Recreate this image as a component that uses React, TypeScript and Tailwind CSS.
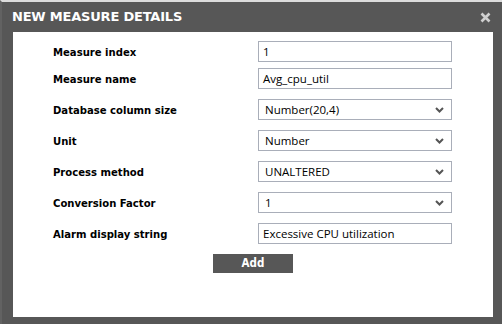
import React from "react";

function Chevron() {
  return (
    <svg
      className="absolute right-[7px] top-1/2 -translate-y-1/2"
      width="9"
      height="6"
      viewBox="0 0 9 6"
    >
      <path d="M1 1 L4.5 4.5 L8 1" stroke="#555" strokeWidth="2" fill="none" />
    </svg>
  );
}

export default function App() {
  const rows = [
    { label: "Measure index", value: "1", kind: "input" },
    { label: "Measure name", value: "Avg_cpu_util", kind: "input" },
    { label: "Database column size", value: "Number(20,4)", kind: "select" },
    { label: "Unit", value: "Number", kind: "select" },
    { label: "Process method", value: "UNALTERED", kind: "select" },
    { label: "Conversion Factor", value: "1", kind: "select" },
    { label: "Alarm display string", value: "Excessive CPU utilization", kind: "input" },
  ];

  return (
    <div className="w-[502px] h-[324px] bg-[#575757] border-t-2 border-t-[#dcdcdc] border-l-2 border-l-[#626262] flex flex-col">
      {/* title bar */}
      <div className="h-[30px] flex items-center justify-between pl-[10px] pr-[10px]">
        <span className="text-white font-bold text-[13px] font-['DejaVu_Sans',sans-serif] tracking-[-0.2px]">
          NEW MEASURE DETAILS
        </span>
        <svg width="11" height="11" viewBox="0 0 11 11" className="mr-[1px]">
          <path d="M1.5 1.5 L9.5 9.5 M9.5 1.5 L1.5 9.5" stroke="#cfcfcf" strokeWidth="2.6" />
        </svg>
      </div>

      {/* body */}
      <div className="ml-[11px] mr-[9px] mb-[7px] flex-1 bg-white pt-[9px] flex flex-col">
        {rows.map((r, i) => (
          <div
            key={r.label}
            className={`flex items-center h-[21px] ${i === 0 ? "" : i === 1 ? "mt-[6px]" : "mt-[10px]"}`}
          >
            <div className="w-[245px] shrink-0 pl-[40px] pt-[3px] text-[11.2px] font-bold text-black font-['DejaVu_Sans_Condensed','DejaVu_Sans',sans-serif] leading-none">
              {r.label}
            </div>
            <div className="relative w-[194px] h-[21px] border border-[#a9aeb9] bg-white flex items-center text-[11.5px] text-black font-['Open_Sans',sans-serif]">
              <span className={r.kind === "input" ? "pl-[4px]" : "pl-[6px]"}>{r.value}</span>
              {r.kind === "select" && <Chevron />}
            </div>
          </div>
        ))}

        <div className="flex justify-center mt-[10px]">
          <button className="w-[80px] h-[19px] bg-[#575757] text-white text-[11.5px] font-bold font-['DejaVu_Sans_Condensed','DejaVu_Sans',sans-serif] leading-none">
            Add
          </button>
        </div>
      </div>
    </div>
  );
}
